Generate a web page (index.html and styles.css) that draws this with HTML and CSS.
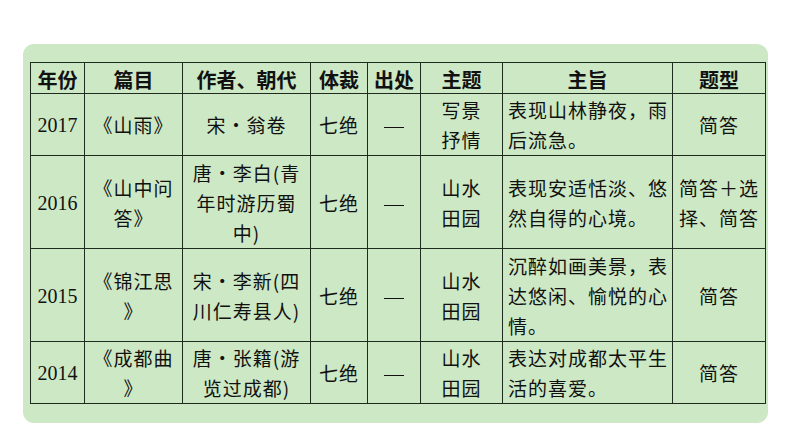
FILE: index.html
```html
<!DOCTYPE html>
<html lang="zh">
<head>
<meta charset="utf-8">
<link rel="stylesheet" href="styles.css">
</head>
<body>
<div class="card">
  <table class="poems">
    <colgroup>
      <col class="c1"><col class="c2"><col class="c3"><col class="c4"><col class="c5"><col class="c6"><col class="c7"><col class="c8">
    </colgroup>
    <thead>
      <tr class="r-head">
        <th>年份</th><th>篇目</th><th>作者、朝代</th><th>体裁</th><th>出处</th><th>主题</th><th>主旨</th><th>题型</th>
      </tr>
    </thead>
    <tbody>
      <tr class="r2">
        <td class="num">2017</td>
        <td>《山雨》</td>
        <td>宋・翁卷</td>
        <td>七绝</td>
        <td><span class="dash"></span></td>
        <td>写景<br>抒情</td>
        <td class="left">表现山林静夜，雨<br>后流急。</td>
        <td>简答</td>
      </tr>
      <tr class="r3">
        <td class="num">2016</td>
        <td>《山中问<br>答》</td>
        <td>唐・李白(青<br>年时游历蜀<br>中)</td>
        <td>七绝</td>
        <td><span class="dash"></span></td>
        <td>山水<br>田园</td>
        <td class="left">表现安适恬淡、悠<br>然自得的心境。</td>
        <td>简答＋选<br>择、简答</td>
      </tr>
      <tr class="r3">
        <td class="num">2015</td>
        <td>《锦江思<br>》</td>
        <td>宋・李新(四<br>川仁寿县人)</td>
        <td>七绝</td>
        <td><span class="dash"></span></td>
        <td>山水<br>田园</td>
        <td class="left">沉醉如画美景，表<br>达悠闲、愉悦的心<br>情。</td>
        <td>简答</td>
      </tr>
      <tr class="r2b">
        <td class="num">2014</td>
        <td>《成都曲<br>》</td>
        <td>唐・张籍(游<br>览过成都)</td>
        <td>七绝</td>
        <td><span class="dash"></span></td>
        <td>山水<br>田园</td>
        <td class="left">表达对成都太平生<br>活的喜爱。</td>
        <td>简答</td>
      </tr>
    </tbody>
  </table>
</div>
</body>
</html>
```

FILE: styles.css
```css
html, body {
  margin: 0;
  padding: 0;
  background: #ffffff;
}
body {
  width: 794px;
  height: 447px;
  overflow: hidden;
  font-family: "Noto Sans CJK SC", "Noto Sans", sans-serif;
  color: #111;
}
.card {
  margin: 44px 0 0 23px;
  width: 745px;
  height: 379px;
  box-sizing: border-box;
  padding: 18px 3px 0 7px;
  background: #cde8c4;
  border-radius: 11px;
}
.poems {
  border-collapse: collapse;
  table-layout: fixed;
  width: 735px;
}
.c1 { width: 54px; }
.c2 { width: 98px; }
.c3 { width: 128px; }
.c4 { width: 57px; }
.c5 { width: 53px; }
.c6 { width: 82px; }
.c7 { width: 170px; }
.c8 { width: 93px; }
.poems th, .poems td {
  border: 1px solid #1f2b1f;
  padding: 0;
  text-align: center;
  vertical-align: middle;
  white-space: nowrap;
  overflow: hidden;
}
.poems th {
  font-size: 20px;
  font-weight: 700;
  line-height: 26px;
  padding-top: 4px;
}
.poems td {
  font-size: 19px;
  line-height: 30px;
  padding-top: 1px;
  letter-spacing: 1px;
}
.poems td.num {
  font-family: "Liberation Serif", serif;
  font-size: 20px;
  letter-spacing: 0;
}
.poems td.left {
  text-align: left;
  padding-left: 5px;
}
.dash {
  display: inline-block;
  width: 20px;
  height: 1px;
  background: #111;
  vertical-align: middle;
}
.r-head { height: 31px; }
.r2 { height: 62px; }
.r3 { height: 93px; }
.r2b { height: 61px; }
```
